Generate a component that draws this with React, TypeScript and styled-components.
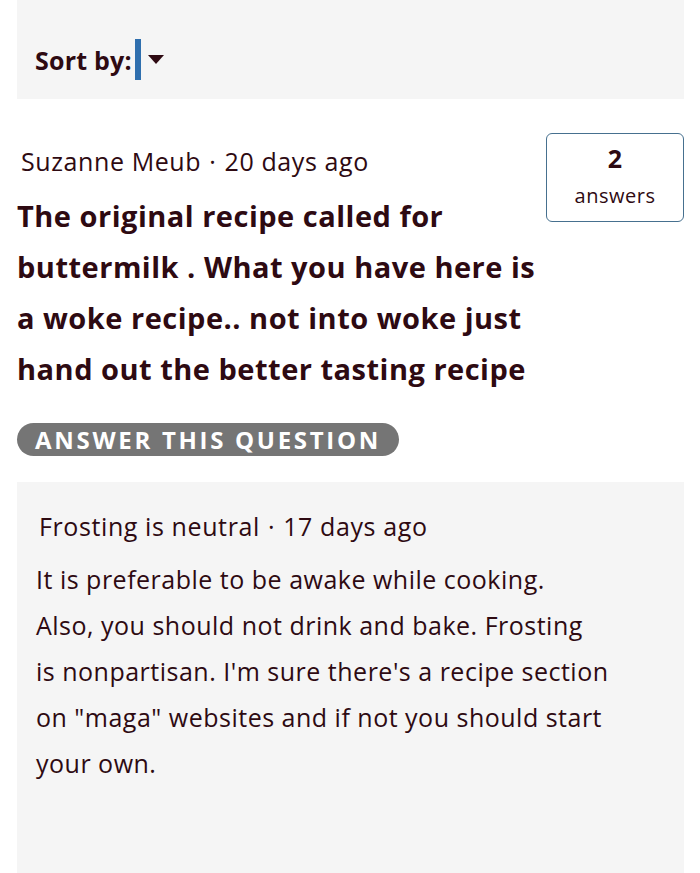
import styled, { createGlobalStyle } from 'styled-components';

const GlobalStyle = createGlobalStyle`
  body {
    margin: 0;
    background: #fff;
    font-family: "Open Sans", "Noto Sans", sans-serif;
    color: #2e0a12;
  }
`

export default function App() {
  return (
    <Page>
      <GlobalStyle />
      <SortBar>
        <SortLabel>Sort by:</SortLabel>
        <Caret />
        <Arrow viewBox="0 0 16 10">
          <path d="M0 0 H16 L8 9 Z" fill="#2e0a12" />
        </Arrow>
      </SortBar>

      <Question>
        <QuestionMain>
          <Meta>Suzanne Meub <Dot>·</Dot> 20 days ago</Meta>
          <QuestionTitle>
            The original recipe called for buttermilk . What you have here is a woke recipe.. not into woke just hand out the better tasting recipe
          </QuestionTitle>
        </QuestionMain>
        <AnswerCount>
          <Count>2</Count>
          <CountLabel>answers</CountLabel>
        </AnswerCount>
      </Question>

      <AnswerButton>Answer this question</AnswerButton>

      <AnswerCard>
        <Meta>Frosting is neutral <Dot>·</Dot> 17 days ago</Meta>
        <AnswerBody>
          It is preferable to be awake while cooking.<br />
          Also, you should not drink and bake. Frosting<br />
          is nonpartisan. I'm sure there's a recipe section<br />
          on "maga" websites and if not you should start<br />
          your own.
        </AnswerBody>
      </AnswerCard>
    </Page>
  )
}

const Page = styled.div`
  padding: 0 16px 0 17px;
  display: flex;
  flex-direction: column;
  height: 873px;
  overflow: hidden;
`

const SortBar = styled.div`
  background: #f5f5f5;
  height: 99px;
  flex-shrink: 0;
  display: flex;
  align-items: center;
  padding: 0 18px;
  padding-top: 20px;
  box-sizing: border-box;
`

const SortLabel = styled.span`
  font-size: 25px;
  font-weight: 700;
  letter-spacing: 0.2px;
`

const Caret = styled.span`
  display: inline-block;
  width: 6px;
  height: 41px;
  background: #2f6fae;
  margin-left: 3px;
`

const Arrow = styled.svg`
  width: 16px;
  height: 10px;
  margin-left: 7px;
`

const Question = styled.div`
  display: flex;
  justify-content: space-between;
  align-items: flex-start;
  margin-top: 35px;
`

const QuestionMain = styled.div`
  width: 525px;
`

const Meta = styled.div`
  font-size: 25px;
  letter-spacing: 0.6px;
  line-height: 30px;
  padding-left: 4px;
  margin-top: 12px;
`

const Dot = styled.span`
  margin: 0 1px;
`

const QuestionTitle = styled.h2`
  margin: 14px 0 0;
  font-size: 29px;
  font-weight: 700;
  letter-spacing: 0.5px;
  line-height: 51px;
`

const AnswerCount = styled.div`
  width: 138px;
  height: 89px;
  box-sizing: border-box;
  border: 1.5px solid #46708f;
  border-radius: 6px;
  display: flex;
  flex-direction: column;
  align-items: center;
  padding-top: 10px;
  margin-top: -1px;
`

const Count = styled.div`
  font-size: 25px;
  font-weight: 700;
  line-height: 28px;
`

const CountLabel = styled.div`
  font-size: 20px;
  letter-spacing: 0.5px;
  line-height: 24px;
  margin-top: 12px;
`

const AnswerButton = styled.button`
  align-self: flex-start;
  margin-top: 29px;
  height: 33px;
  padding: 0 18px;
  border: none;
  border-radius: 17px;
  background: #757575;
  color: #fff;
  font-family: "Open Sans", "Noto Sans", sans-serif;
  font-size: 24px;
  font-weight: 700;
  letter-spacing: 2.7px;
  text-transform: uppercase;
  line-height: 33px;
`

const AnswerCard = styled.div`
  margin-top: 26px;
  background: #f5f5f5;
  flex: 1;
  padding: 17px 18px 0 18px;
`

const AnswerBody = styled.p`
  margin: 15px 0 0 1px;
  font-size: 25px;
  letter-spacing: 0.5px;
  line-height: 46px;
`
